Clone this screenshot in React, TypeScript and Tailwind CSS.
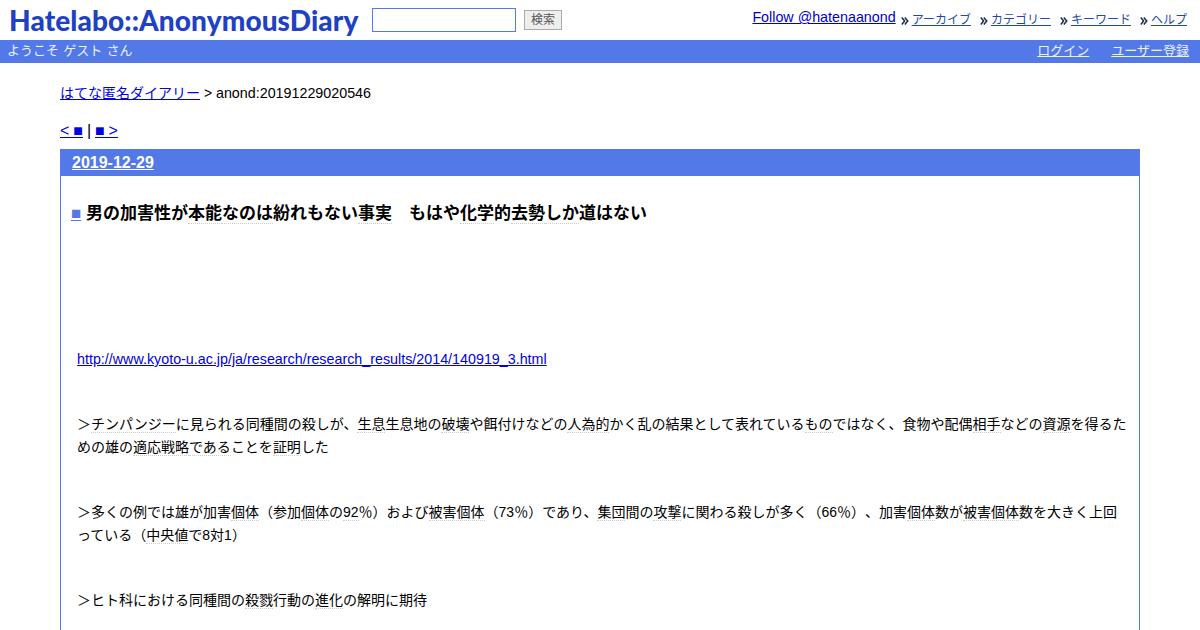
import React from 'react';

const K = ({ children }: { children: React.ReactNode }) => (
  <span className="border-b border-dotted border-[#cccccc]">{children}</span>
);

const NavLink = ({ label }: { label: string }) => (
  <span className="flex items-center ml-[4px]">
    <svg width="8" height="10" viewBox="0 0 8 10" className="mr-[3px] mt-[2px]" fill="none" stroke="#1c2a50" strokeWidth="1.5">
      <path d="M0.8 1.5 L3.6 5 L0.8 8.5" />
      <path d="M3.8 1.5 L6.8 5 L3.8 8.5" />
    </svg>
    <a className="text-[12px] text-[#1f4aa8] underline">{label}</a>
  </span>
);

export default function App() {
  return (
    <div className="w-[1200px] h-[630px] overflow-hidden bg-white text-black text-[14px] [text-spacing-trim:space-all] font-['Liberation_Sans','Noto_Sans_CJK_JP',sans-serif]">
      <header className="h-10 flex items-center justify-between pl-[9px] pr-[13px]">
        <div className="flex items-center">
          <h1 className="w-[349px] text-[28px] leading-[40px] font-black text-[#2141c4] font-['Lato',sans-serif] tracking-[0.1px] whitespace-nowrap">
            Hatelabo::AnonymousDiary
          </h1>
          <input className="ml-[14px] w-[144px] h-6 border border-[#5279e7] bg-white" />
          <button className="ml-2 w-[38px] h-5 border border-[#aaaaaa] bg-[#eeeeee] text-[12px] text-[#555555]">検索</button>
        </div>
        <div className="flex items-center">
          <a className="text-[14.3px] text-[#0000cc] underline mb-[4px] mr-[1px]">Follow @hatenaanond</a>
          <NavLink label="アーカイブ" />
          <span className="w-[5px]" />
          <NavLink label="カテゴリー" />
          <span className="w-[5px]" />
          <NavLink label="キーワード" />
          <span className="w-[5px]" />
          <NavLink label="ヘルプ" />
        </div>
      </header>

      <div className="h-[23px] bg-[#5279e7] flex items-center justify-between pl-[7px] pr-[11px] pb-[1px] text-[13px] text-[#eef2ff]">
        <span className="[word-spacing:0.7px]">ようこそ ゲスト さん</span>
        <div className="flex gap-[22px]">
          <a className="underline">ログイン</a>
          <a className="underline">ユーザー登録</a>
        </div>
      </div>

      <main className="px-[60px]">
        <p className="mt-[21px] leading-[18px]">
          <a className="text-[#0000e0] underline">はてな匿名ダイアリー</a> &gt; <span className="text-[14.3px]">anond:20191229020546</span>
        </p>
        <p className="mt-[20px] text-[16px] leading-[18px] [word-spacing:-0.5px]">
          <a className="text-[#0000e0] underline">&lt; ■</a> | <a className="text-[#0000e0] underline">■ &gt;</a>
        </p>

        <section className="mt-[9px] border border-[#5279e7] h-[600px]">
          <div className="h-[26px] bg-[#5279e7] pl-[11px] text-[16px] leading-[26px] font-bold text-white">
            <a className="underline">2019-12-29</a>
          </div>

          <h2 className="mt-[28px] pl-[10px] text-[17px] leading-5 font-bold whitespace-nowrap">
            <a className="text-[#5279e7] underline font-normal">■</a> 男の加害性が<K>本能</K><K>なのは</K>紛れもない<K>事実</K>　もはや<K>化学</K>的<K>去勢</K><K>しか</K>道はない
          </h2>

          <div className="pl-4 pr-3 leading-[23px]">
            <p className="mt-[124px]">
              <a className="text-[14.3px] text-[#0000e0] underline">http://www.kyoto-u.ac.jp/ja/research/research_results/2014/140919_3.html</a>
            </p>
            <p className="mt-[42px]">
              ＞<K>チンパンジー</K>に見られる同種間の殺しが、<K>生息</K>生息地の<K>破壊</K>や餌付けなどの<K>人為的</K>かく乱の結果として表れている<K>もの</K>ではなく、食物や配偶<K>相手</K>などの<K>資源</K>を得るための雄の<K>適応戦略</K><K>である</K>ことを<K>証明</K>した
            </p>
            <p className="mt-[42px]">
              ＞多くの例では雄が加害<K>個体</K>（参加<K>個体</K>の<K>92</K>％）および<K>被害個体</K>（73％）であり、<K>集団</K>間の<K>攻撃</K>に関わる殺しが多く（66％）、加害<K>個体</K>数が<K>被害個体</K>数を大きく上回っている（<K>中央値</K>で8対1）
            </p>
            <p className="mt-[42px]">
              ＞ヒト科における同種間の<K>殺戮</K>行動の<K>進化</K>の解明に期待
            </p>
          </div>
        </section>
      </main>
    </div>
  );
}
